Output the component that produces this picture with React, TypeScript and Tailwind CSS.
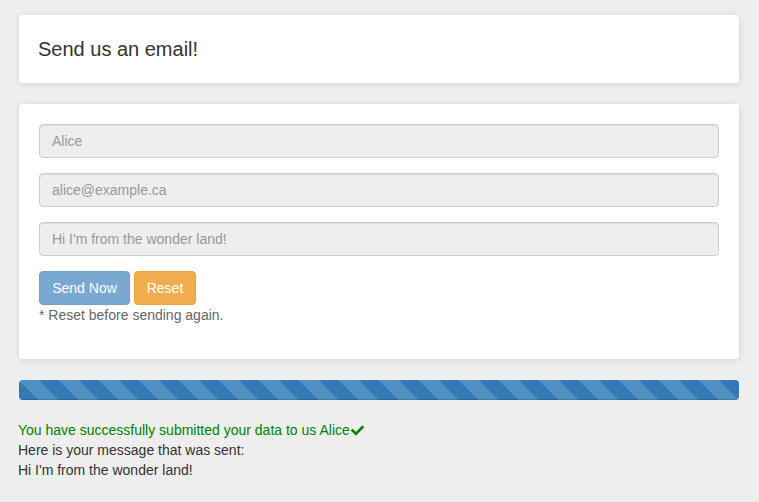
import { FaCheck } from 'react-icons/fa';

export default function App() {
  const name = 'Alice';
  const email = 'alice@example.ca';
  const message = "Hi I'm from the wonder land!";

  return (
    <div
      className="min-h-screen bg-[#eeeeee] pl-[19px] pr-5 pt-[15px] pb-8 text-[14px] leading-[20px] text-[#333]"
      style={{ fontFamily: '"Liberation Sans", Arial, sans-serif' }}
    >
      {/* Header card */}
      <div className="rounded-[3px] bg-white px-[19px] py-5 shadow-[0_1px_6px_rgba(0,0,0,0.12)]">
        <h1 className="text-[20px] leading-[28px] font-normal text-[#333]">Send us an email!</h1>
      </div>

      {/* Form card */}
      <div className="mt-[21px] rounded-[3px] bg-white px-5 pt-5 pb-[34px] shadow-[0_1px_6px_rgba(0,0,0,0.12)]">
        <div className="flex flex-col gap-[15px]">
          {[name, email, message].map((value) => (
            <input
              key={value}
              type="text"
              disabled
              placeholder={value}
              className="h-[34px] w-full rounded-[4px] border border-[#cccccc] bg-[#eeeeee] px-3 text-[14px] text-[#555] placeholder:text-[#999] shadow-[inset_0_1px_1px_rgba(0,0,0,0.075)]"
            />
          ))}
        </div>
        <div className="mt-[15px] flex gap-1">
          <button
            type="button"
            className="h-[34px] w-[91px] rounded-[4px] border border-[#2e6da4] bg-[#337ab7] text-[14px] text-white opacity-65"
          >
            Send Now
          </button>
          <button
            type="button"
            className="h-[34px] w-[62px] rounded-[4px] border border-[#eea236] bg-[#f0ad4e] text-[14px] text-white"
          >
            Reset
          </button>
        </div>
        <p className="text-[#666]">* Reset before sending again.</p>
      </div>

      {/* Progress bar */}
      <div className="mt-[21px] h-5 overflow-hidden rounded-[4px] bg-[#f5f5f5]">
        <div className="h-full w-full bg-[#337ab7] bg-[image:linear-gradient(45deg,rgba(255,255,255,.15)_25%,transparent_25%,transparent_50%,rgba(255,255,255,.15)_50%,rgba(255,255,255,.15)_75%,transparent_75%,transparent)] bg-[length:40px_40px] shadow-[inset_0_-1px_0_rgba(0,0,0,0.15)]" />
      </div>

      {/* Result */}
      <div className="mt-5 -ml-px">
        <div className="flex items-center text-[#008000]">
          You have successfully submitted your data to us {name}
          <FaCheck className="ml-px" size={13} />
        </div>
        <div>Here is your message that was sent:</div>
        <div>{message}</div>
      </div>
    </div>
  );
}
